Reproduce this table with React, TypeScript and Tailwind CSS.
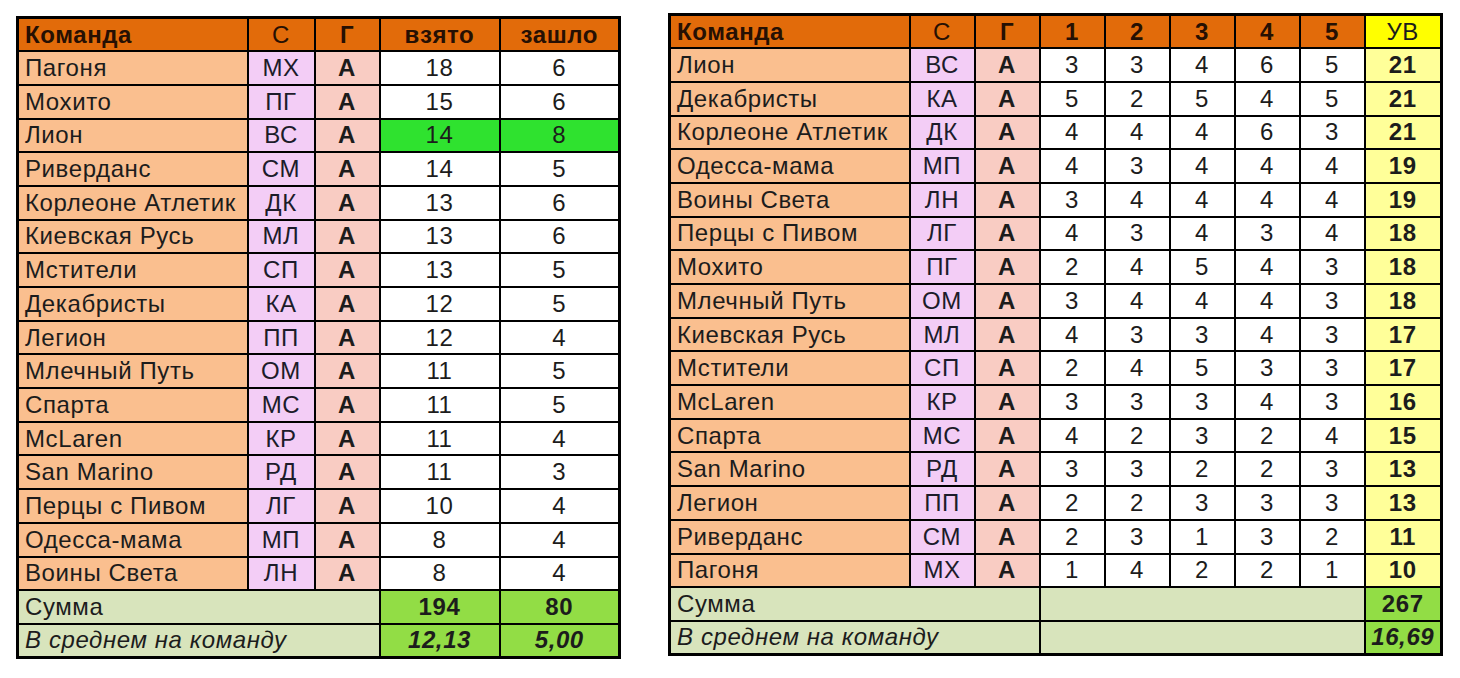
const left: [string, string, number, number][] = [
  ['Пагоня', 'МХ', 18, 6],
  ['Мохито', 'ПГ', 15, 6],
  ['Лион', 'ВС', 14, 8],
  ['Риверданс', 'СМ', 14, 5],
  ['Корлеоне Атлетик', 'ДК', 13, 6],
  ['Киевская Русь', 'МЛ', 13, 6],
  ['Мстители', 'СП', 13, 5],
  ['Декабристы', 'КА', 12, 5],
  ['Легион', 'ПП', 12, 4],
  ['Млечный Путь', 'ОМ', 11, 5],
  ['Спарта', 'МС', 11, 5],
  ['McLaren', 'КР', 11, 4],
  ['San Marino', 'РД', 11, 3],
  ['Перцы с Пивом', 'ЛГ', 10, 4],
  ['Одесса-мама', 'МП', 8, 4],
  ['Воины Света', 'ЛН', 8, 4],
]

const right: [string, string, number[], number][] = [
  ['Лион', 'ВС', [3, 3, 4, 6, 5], 21],
  ['Декабристы', 'КА', [5, 2, 5, 4, 5], 21],
  ['Корлеоне Атлетик', 'ДК', [4, 4, 4, 6, 3], 21],
  ['Одесса-мама', 'МП', [4, 3, 4, 4, 4], 19],
  ['Воины Света', 'ЛН', [3, 4, 4, 4, 4], 19],
  ['Перцы с Пивом', 'ЛГ', [4, 3, 4, 3, 4], 18],
  ['Мохито', 'ПГ', [2, 4, 5, 4, 3], 18],
  ['Млечный Путь', 'ОМ', [3, 4, 4, 4, 3], 18],
  ['Киевская Русь', 'МЛ', [4, 3, 3, 4, 3], 17],
  ['Мстители', 'СП', [2, 4, 5, 3, 3], 17],
  ['McLaren', 'КР', [3, 3, 3, 4, 3], 16],
  ['Спарта', 'МС', [4, 2, 3, 2, 4], 15],
  ['San Marino', 'РД', [3, 3, 2, 2, 3], 13],
  ['Легион', 'ПП', [2, 2, 3, 3, 3], 13],
  ['Риверданс', 'СМ', [2, 3, 1, 3, 2], 11],
  ['Пагоня', 'МХ', [1, 4, 2, 2, 1], 10],
]

const td = 'border-2 border-black p-0 h-[33.7px] leading-none'
const hd = `${td} bg-[#e26b0a] text-[#261003]`
const name = `${td} bg-[#fabf8f] text-left pl-[6px] text-[#1c1c1c]`
const code = `${td} bg-[#f3cdf6] text-center text-[#1c1c2a]`
const grp = `${td} bg-[#f9ccc3] text-center font-bold text-[#1c1c1c]`
const num = `${td} bg-white text-center text-[#1c1c1c]`
const foot = `${td} bg-[#d8e4bc] text-left pl-[6px] text-[#1c1c1c]`
const lime = `${td} bg-[#92dd45] text-center font-bold text-[#1c1c1c]`

export default function App() {
  return (
    <div className="flex items-start gap-[47px] bg-white pl-[16px] pt-[13px] w-[1460px] h-[678px] font-['Liberation_Sans',Arial,sans-serif] text-[24px] tracking-[0.6px]">
      {/* left table: totals */}
      <table className="mt-[3px] w-[605px] table-fixed border-collapse border-[3px] border-black">
        <colgroup>
          <col className="w-[230px]" />
          <col className="w-[67px]" />
          <col className="w-[65px]" />
          <col className="w-[120px]" />
          <col className="w-[120px]" />
        </colgroup>
        <tbody>
          <tr>
            <td className={`${hd} text-left pl-[6px] font-bold`}>Команда</td>
            <td className={`${hd} text-center`}>С</td>
            <td className={`${hd} text-center font-bold`}>Г</td>
            <td className={`${hd} text-center font-bold`}>взято</td>
            <td className={`${hd} text-center font-bold`}>зашло</td>
          </tr>
          {left.map(([n, c, a, b]) => {
            const hl = n === 'Лион'
            return (
              <tr key={n}>
                <td className={name}>{n}</td>
                <td className={code}>{c}</td>
                <td className={grp}>А</td>
                <td className={hl ? `${num} !bg-[#2fe22f]` : num}>{a}</td>
                <td className={hl ? `${num} !bg-[#2fe22f]` : num}>{b}</td>
              </tr>
            )
          })}
          <tr>
            <td colSpan={3} className={foot}>Сумма</td>
            <td className={lime}>194</td>
            <td className={lime}>80</td>
          </tr>
          <tr>
            <td colSpan={3} className={`${foot} italic`}>В среднем на команду</td>
            <td className={`${lime} italic`}>12,13</td>
            <td className={`${lime} italic`}>5,00</td>
          </tr>
        </tbody>
      </table>

      {/* right table: by round */}
      <table className="w-[773px] table-fixed border-collapse border-[3px] border-black">
        <colgroup>
          <col className="w-[240px]" />
          <col className="w-[65px]" />
          <col className="w-[65px]" />
          <col className="w-[65px]" />
          <col className="w-[65px]" />
          <col className="w-[65px]" />
          <col className="w-[65px]" />
          <col className="w-[65px]" />
          <col className="w-[77px]" />
        </colgroup>
        <tbody>
          <tr>
            <td className={`${hd} text-left pl-[6px] font-bold`}>Команда</td>
            <td className={`${hd} text-center`}>С</td>
            <td className={`${hd} text-center font-bold`}>Г</td>
            {[1, 2, 3, 4, 5].map((i) => (
              <td key={i} className={`${hd} text-center font-bold`}>{i}</td>
            ))}
            <td className={`${td} bg-[#ffff00] text-center text-[#1c1c1c]`}>УВ</td>
          </tr>
          {right.map(([n, c, r, t]) => (
            <tr key={n}>
              <td className={name}>{n}</td>
              <td className={code}>{c}</td>
              <td className={grp}>А</td>
              {r.map((v, i) => (
                <td key={i} className={num}>{v}</td>
              ))}
              <td className={`${td} bg-[#ffff99] text-center font-bold text-[#1c1c1c]`}>{t}</td>
            </tr>
          ))}
          <tr>
            <td colSpan={3} className={foot}>Сумма</td>
            <td colSpan={5} className={foot}></td>
            <td className={lime}>267</td>
          </tr>
          <tr>
            <td colSpan={3} className={`${foot} italic`}>В среднем на команду</td>
            <td colSpan={5} className={foot}></td>
            <td className={`${lime} italic`}>16,69</td>
          </tr>
        </tbody>
      </table>
    </div>
  )
}
